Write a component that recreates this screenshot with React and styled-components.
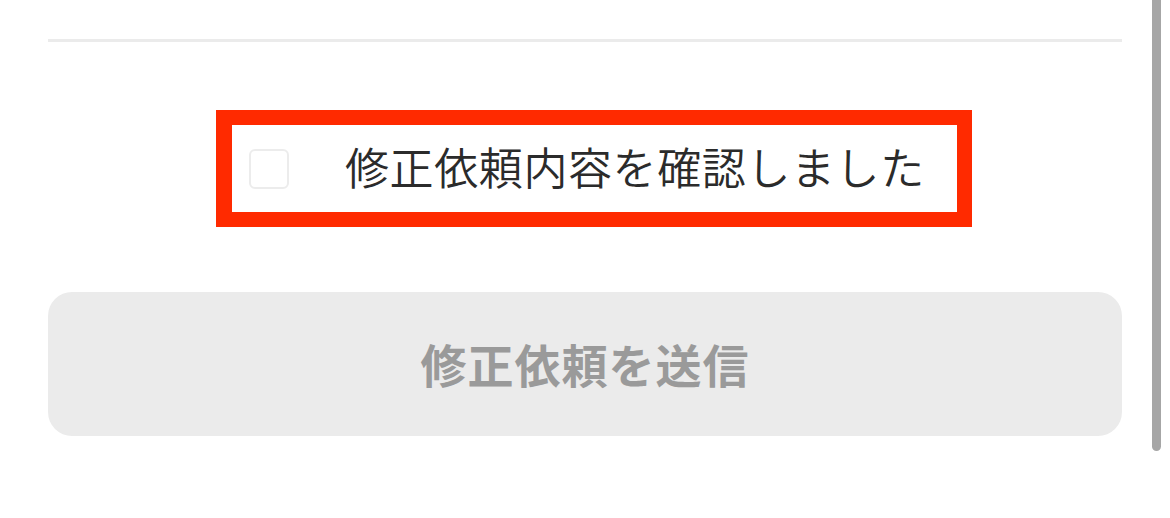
import styled, { createGlobalStyle } from "styled-components"

const GlobalStyle = createGlobalStyle`
  html, body {
    margin: 0;
    padding: 0;
    background: #fff;
  }
  body {
    font-family: "Noto Sans CJK JP", "Noto Sans", sans-serif;
    color: #333;
  }
`

const Page = styled.div`
  position: relative;
  width: 1170px;
  height: 518px;
  overflow: hidden;
  background: #fff;
`

const Content = styled.div`
  display: flex;
  flex-direction: column;
  align-items: stretch;
  padding: 39px 48px 0;
`

const Divider = styled.hr`
  margin: 0;
  border: none;
  height: 3px;
  background: #ebebeb;
`

const ConfirmRow = styled.div`
  display: flex;
  justify-content: center;
  padding-left: 18px;
  margin-top: 68px;
`

const ConfirmLabel = styled.label`
  display: flex;
  align-items: center;
  box-sizing: border-box;
  width: 756px;
  height: 117px;
  border: 15px solid #ff2a00;
  border-left-width: 16px;
  padding-left: 17px;
  cursor: pointer;
`

const CheckBox = styled.span`
  display: inline-block;
  box-sizing: border-box;
  width: 40px;
  height: 40px;
  border: 2px solid #ececec;
  border-radius: 6px;
  background: #fff;
  flex-shrink: 0;
`

const LabelText = styled.span`
  margin-left: 56px;
  margin-bottom: 5px;
  font-size: 44px;
  font-weight: 350;
  line-height: 1;
  letter-spacing: 0.6px;
  color: #2b2b2b;
  white-space: nowrap;
`

const SubmitButton = styled.button`
  margin-top: 65px;
  height: 144px;
  padding-bottom: 4px;
  border: none;
  border-radius: 24px;
  background: #ebebeb;
  color: #9a9a9a;
  font-family: "Noto Sans CJK JP", "Noto Sans", sans-serif;
  font-size: 46px;
  font-weight: 700;
  letter-spacing: 1px;
  cursor: not-allowed;
`

const ScrollThumb = styled.div`
  position: absolute;
  top: -10px;
  right: 9px;
  width: 9px;
  height: 461px;
  border-radius: 5px;
  background: #a6a6a6;
`

export default function App() {
  return (
    <Page>
      <GlobalStyle />
      <Content>
        <Divider />
        <ConfirmRow>
          <ConfirmLabel>
            <CheckBox />
            <LabelText>修正依頼内容を確認しました</LabelText>
          </ConfirmLabel>
        </ConfirmRow>
        <SubmitButton disabled>修正依頼を送信</SubmitButton>
      </Content>
      <ScrollThumb />
    </Page>
  )
}
